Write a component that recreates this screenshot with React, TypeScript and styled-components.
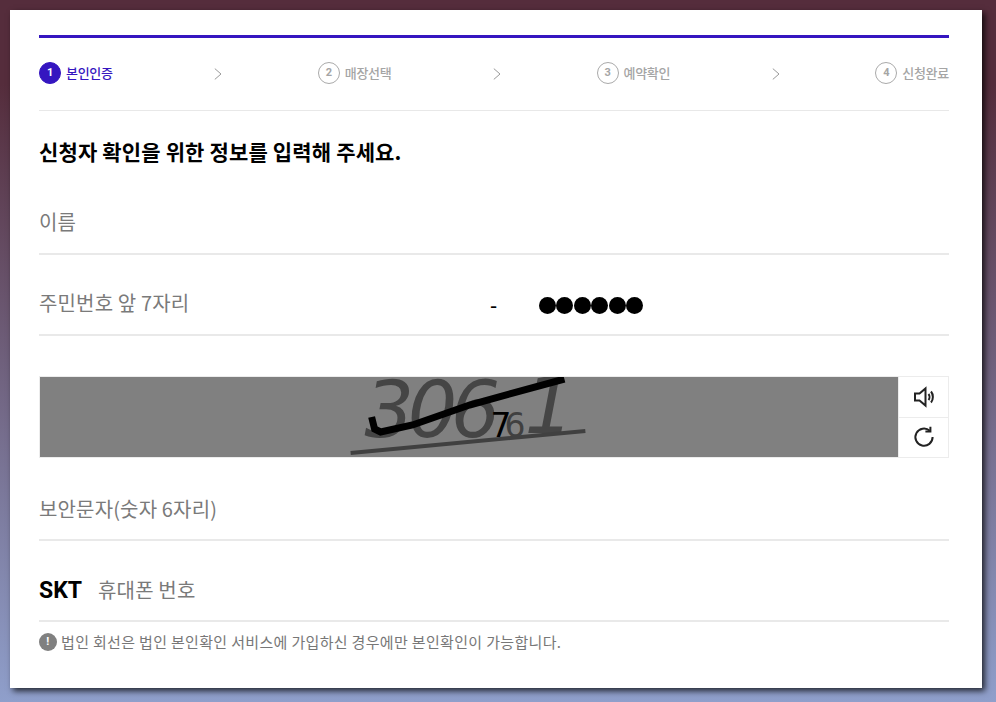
import React from 'react';
import styled, { createGlobalStyle } from 'styled-components';

const GlobalStyle = createGlobalStyle`
  html, body {
    margin: 0;
    padding: 0;
    height: 702px;
    overflow: hidden;
  }
  body {
    background: linear-gradient(180deg, #552d3c 0%, #552d3c 12%, #8f9fcb 100%);
    font-family: "Noto Sans CJK KR", "Noto Sans", sans-serif;
  }
`;

const Panel = styled.div`
  box-sizing: border-box;
  margin: 10px 0 0 10px;
  width: 972px;
  height: 678px;
  padding: 25px 33px 0 29px;
  background: #fff;
  box-shadow: 3px 3px 6px rgba(0, 0, 0, 0.75);
`;

const Steps = styled.ol`
  display: flex;
  align-items: center;
  justify-content: space-between;
  box-sizing: border-box;
  height: 76px;
  margin: 0;
  padding: 0 0 3px;
  list-style: none;
  border-top: 3px solid #3516c0;
  border-bottom: 1px solid #e8e8e8;
`;

const Step = styled.li<{ $active?: boolean }>`
  display: flex;
  align-items: center;
  gap: 5px;
  font-size: 13px;
  letter-spacing: -0.3px;
  font-weight: 500;
  color: ${props => (props.$active ? '#3516c0' : '#a5a5a5')};
`;

const StepNumber = styled.span<{ $active?: boolean }>`
  box-sizing: border-box;
  display: flex;
  align-items: center;
  justify-content: center;
  width: 22px;
  height: 22px;
  border-radius: 50%;
  border: 1px solid ${props => (props.$active ? '#3516c0' : '#aaa')};
  background: ${props => (props.$active ? '#3516c0' : '#fff')};
  color: ${props => (props.$active ? '#fff' : '#a5a5a5')};
  font-family: "Roboto", sans-serif;
  font-size: 11px;
  font-weight: 700;
`;

const Chevron = styled.svg`
  display: block;
  width: 8px;
  height: 12px;
  margin: 2px 0 0 6px;
  fill: none;
  stroke: #999;
  stroke-width: 1;
`;

const Heading = styled.h2`
  margin: 25px 0 7px;
  height: 31px;
  font-size: 21px;
  line-height: 31px;
  font-weight: 700;
  color: #000;
  letter-spacing: 0.15px;
`;

const Field = styled.div<{ $height?: number; $pad?: number }>`
  display: flex;
  align-items: center;
  box-sizing: border-box;
  height: ${props => props.$height ?? 81}px;
  border-bottom: 2px solid #e9e9e9;
  font-size: 20px;
  letter-spacing: 0.15px;
  color: #7a7a7a;
  padding-top: ${props => props.$pad ?? 16}px;
`;

const HalfLabel = styled.span`
  width: 451px;
`;

const Dash = styled.span`
  width: 49px;
  margin-top: 4px;
  font-weight: 500;
  color: #000;
`;

const Masked = styled.span`
  display: flex;
  gap: 0.4px;
  margin-top: 6px;
`;

const Dot = styled.i`
  display: block;
  width: 17px;
  height: 17px;
  border-radius: 50%;
  background: #000;
`;

const Captcha = styled.div`
  display: flex;
  height: 82px;
  margin-top: 40px;
`;

const CaptchaImage = styled.svg`
  display: block;
  flex: 1;
  height: 82px;
  background: #808080;
  border: 1px solid #ececec;
  border-right: 0;
  box-sizing: border-box;
`;

const CaptchaButtons = styled.div`
  display: flex;
  flex-direction: column;
  box-sizing: border-box;
  width: 51px;
  border: 1px solid #ececec;
`;

const IconButton = styled.button`
  display: flex;
  align-items: center;
  justify-content: center;
  flex: 1;
  padding: 0;
  border: 0;
  background: #fff;
  & + & {
    border-top: 1px solid #ececec;
  }
`;

const Carrier = styled.strong`
  margin: 2px 16px 0 0;
  font-family: "Roboto", "Noto Sans", sans-serif;
  font-size: 23px;
  font-weight: 700;
  letter-spacing: 0;
  color: #000;
`;

const Notice = styled.p`
  display: flex;
  align-items: center;
  gap: 4px;
  margin: 10px 0 0;
  font-size: 15px;
  line-height: 20px;
  color: #777;
  letter-spacing: 0.33px;
`;

const NoticeMark = styled.span`
  display: flex;
  align-items: center;
  justify-content: center;
  width: 18px;
  height: 18px;
  border-radius: 50%;
  background: #808080;
  color: #fff;
  font-family: "Roboto", sans-serif;
  font-size: 11px;
  font-weight: 700;
`;

const steps = ['본인인증', '매장선택', '예약확인', '신청완료'];

const App: React.FC = () => (
  <>
    <GlobalStyle />
    <Panel>
      <Steps>
        {steps.map((label, i) => (
          <React.Fragment key={label}>
            {i > 0 && (
              <li>
                <Chevron viewBox="0 0 8 12">
                  <path d="M0.8 0.6 L7 6 L0.8 11.4" />
                </Chevron>
              </li>
            )}
            <Step $active={i === 0}>
              <StepNumber $active={i === 0}>{i + 1}</StepNumber>
              {label}
            </Step>
          </React.Fragment>
        ))}
      </Steps>
      <Heading>신청자 확인을 위한 정보를 입력해 주세요.</Heading>
      <Field>이름</Field>
      <Field>
        <HalfLabel>주민번호 앞 7자리</HalfLabel>
        <Dash>-</Dash>
        <Masked>
          {[0, 1, 2, 3, 4, 5].map(n => (
            <Dot key={n} />
          ))}
        </Masked>
      </Field>
      <Captcha>
        <CaptchaImage viewBox="0 0 859 80" preserveAspectRatio="none">
          <text x="325" y="60" fontFamily="DejaVu Sans" fontStyle="italic" fontSize="78" fill="#454545" letterSpacing="-6.5">
            306
          </text>
          <text x="485" y="56" fontFamily="DejaVu Sans" fontStyle="italic" fontSize="78" fill="#454545">
            1
          </text>
          <text x="451" y="60" fontFamily="DejaVu Sans" fontSize="33" fill="#000">
            7
          </text>
          <text x="465" y="60" fontFamily="DejaVu Sans" fontSize="33" fill="#404040">
            6
          </text>
          <path d="M311 76 L546 54" stroke="#404040" strokeWidth="4" fill="none" />
          <path
            d="M332 40 L335 52 L341 55 L373 48 L430 28 L525 2"
            stroke="#000"
            strokeWidth="7"
            fill="none"
          />
        </CaptchaImage>
        <CaptchaButtons>
          <IconButton aria-label="음성">
            <svg width="22" height="22" viewBox="0 0 22 22" fill="none" stroke="#222" strokeWidth="2">
              <path d="M2 7.5 H6.5 L12.5 2.5 V19.5 L6.5 14.5 H2 Z" strokeLinejoin="miter" />
              <path d="M15.5 8 C16.8 9.6 16.8 12.4 15.5 14" />
              <path d="M18 5.5 C20.5 8.5 20.5 13.5 18 16.5" />
            </svg>
          </IconButton>
          <IconButton aria-label="새로고침">
            <svg width="22" height="22" viewBox="0 0 22 22" fill="none" stroke="#222" strokeWidth="2">
              <path d="M16.8 4.8 A8.6 8.6 0 1 0 19.6 11" />
              <path d="M12.4 5.6 H17.4 V0.8" strokeLinejoin="miter" />
            </svg>
          </IconButton>
        </CaptchaButtons>
      </Captcha>
      <Field $height={83} $pad={19}>보안문자(숫자 6자리)</Field>
      <Field $pad={18}>
        <Carrier>SKT</Carrier>
        휴대폰 번호
      </Field>
      <Notice>
        <NoticeMark>!</NoticeMark>
        법인 회선은 법인 본인확인 서비스에 가입하신 경우에만 본인확인이 가능합니다.
      </Notice>
    </Panel>
  </>
);

export default App;
